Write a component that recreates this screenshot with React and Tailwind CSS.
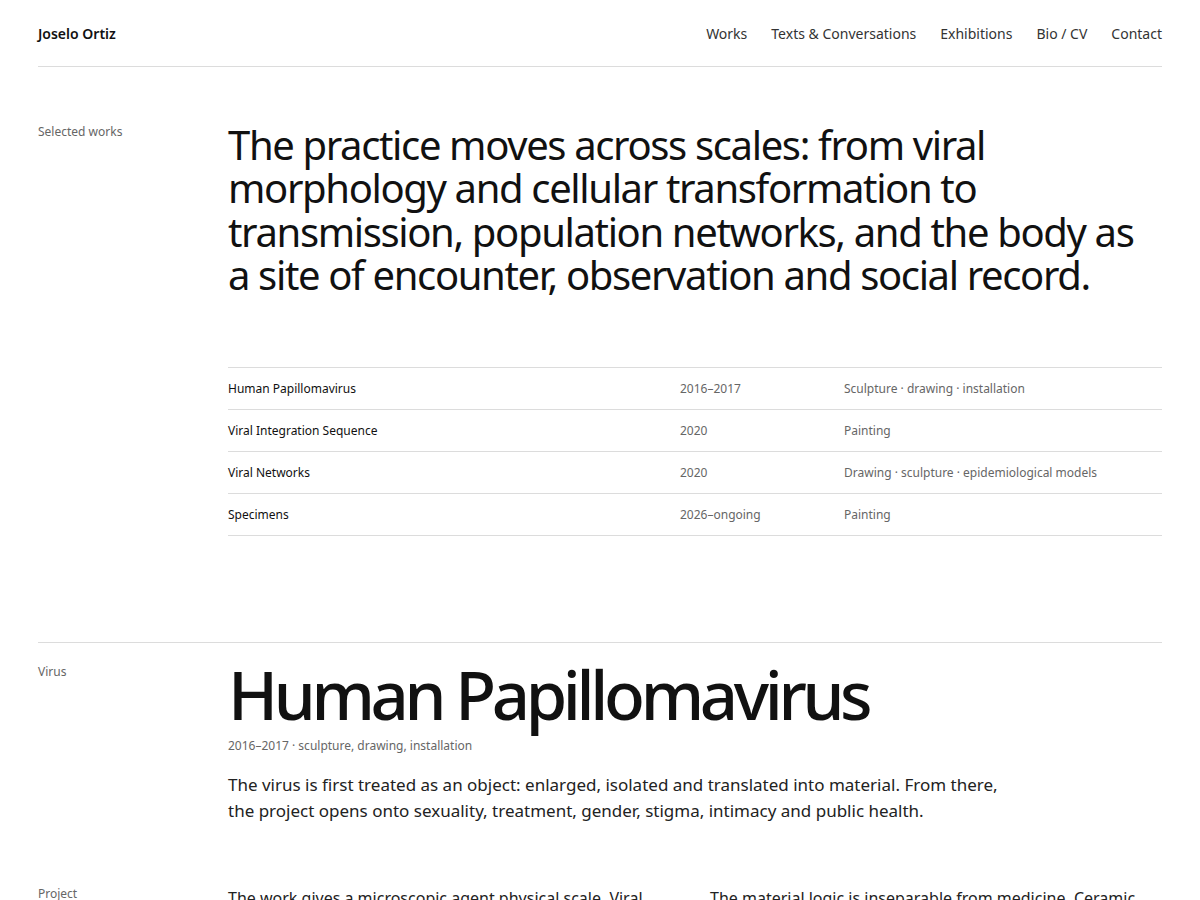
const works = [
  { title: "Human Papillomavirus", year: "2016–2017", medium: "Sculpture · drawing · installation" },
  { title: "Viral Integration Sequence", year: "2020", medium: "Painting" },
  { title: "Viral Networks", year: "2020", medium: "Drawing · sculpture · epidemiological models" },
  { title: "Specimens", year: "2026–ongoing", medium: "Painting" },
];

const nav = ["Works", "Texts & Conversations", "Exhibitions", "Bio / CV", "Contact"];

export default function App() {
  return (
    <div className="min-h-screen bg-white text-[#111] font-['Noto_Sans',sans-serif] px-[38px]">
      {/* header */}
      <header className="h-[67px] flex items-center justify-between border-b border-[#dcdcdc]">
        <a className="text-[14px] font-semibold">Joselo Ortiz</a>
        <nav className="flex gap-6 text-[14px] text-[#333]">
          {nav.map((n) => (
            <a key={n}>{n}</a>
          ))}
        </nav>
      </header>

      {/* selected works */}
      <section className="grid grid-cols-[190px_1fr] pt-[56px] pb-[106px]">
        <p className="text-[12px] leading-[18px] text-[#666]">Selected works</p>
        <div>
          <h1 className="text-[40px] leading-[1.085] tracking-[-0.034em] font-normal">
            The practice moves across scales: from viral morphology and cellular transformation to
            transmission, population networks, and the body as a site of encounter, observation and
            social record.
          </h1>
          <div className="mt-[70px] border-t border-[#dcdcdc]">
            {works.map((w) => (
              <div
                key={w.title}
                className="grid grid-cols-[452px_164px_1fr] h-[42px] pt-[2px] items-center border-b border-[#dcdcdc] text-[12px]"
              >
                <span className="text-[#111]">{w.title}</span>
                <span className="text-[#666]">{w.year}</span>
                <span className="text-[#666]">{w.medium}</span>
              </div>
            ))}
          </div>
        </div>
      </section>

      {/* HPV */}
      <section className="border-t border-[#dcdcdc] pt-[20px]">
        <div className="grid grid-cols-[190px_1fr]">
          <p className="text-[12px] leading-[18px] text-[#666]">Virus</p>
          <div>
            <h2 className="-mt-[4px] text-[67px] leading-[1.05] tracking-[-0.065em] font-medium">Human Papillomavirus</h2>
            <p className="mt-[8px] text-[12px] leading-[18px] text-[#666]">2016–2017 · sculpture, drawing, installation</p>
            <p className="mt-[17px] text-[17px] leading-[26px] text-[#222] max-w-[780px]">
              The virus is first treated as an object: enlarged, isolated and translated into material. From there,
              the project opens onto sexuality, treatment, gender, stigma, intimacy and public health.
            </p>
          </div>
        </div>
        <div className="grid grid-cols-[190px_1fr] mt-[61px] pb-[60px]">
          <p className="text-[12px] leading-[18px] text-[#666]">Project</p>
          <div className="grid grid-cols-2 gap-x-[30px] text-[16px] leading-[26px] text-[#222]">
            <p>
              The work gives a microscopic agent physical scale. Viral geometry becomes sculpture, drawing and
              installation, a form that can be approached, circled and held in the body's field of vision.
            </p>
            <p>
              The material logic is inseparable from medicine. Ceramic, resin and paper register the clinical
              imagination around the virus, its treatments and the public language that surrounds it.
            </p>
          </div>
        </div>
      </section>
    </div>
  );
}
